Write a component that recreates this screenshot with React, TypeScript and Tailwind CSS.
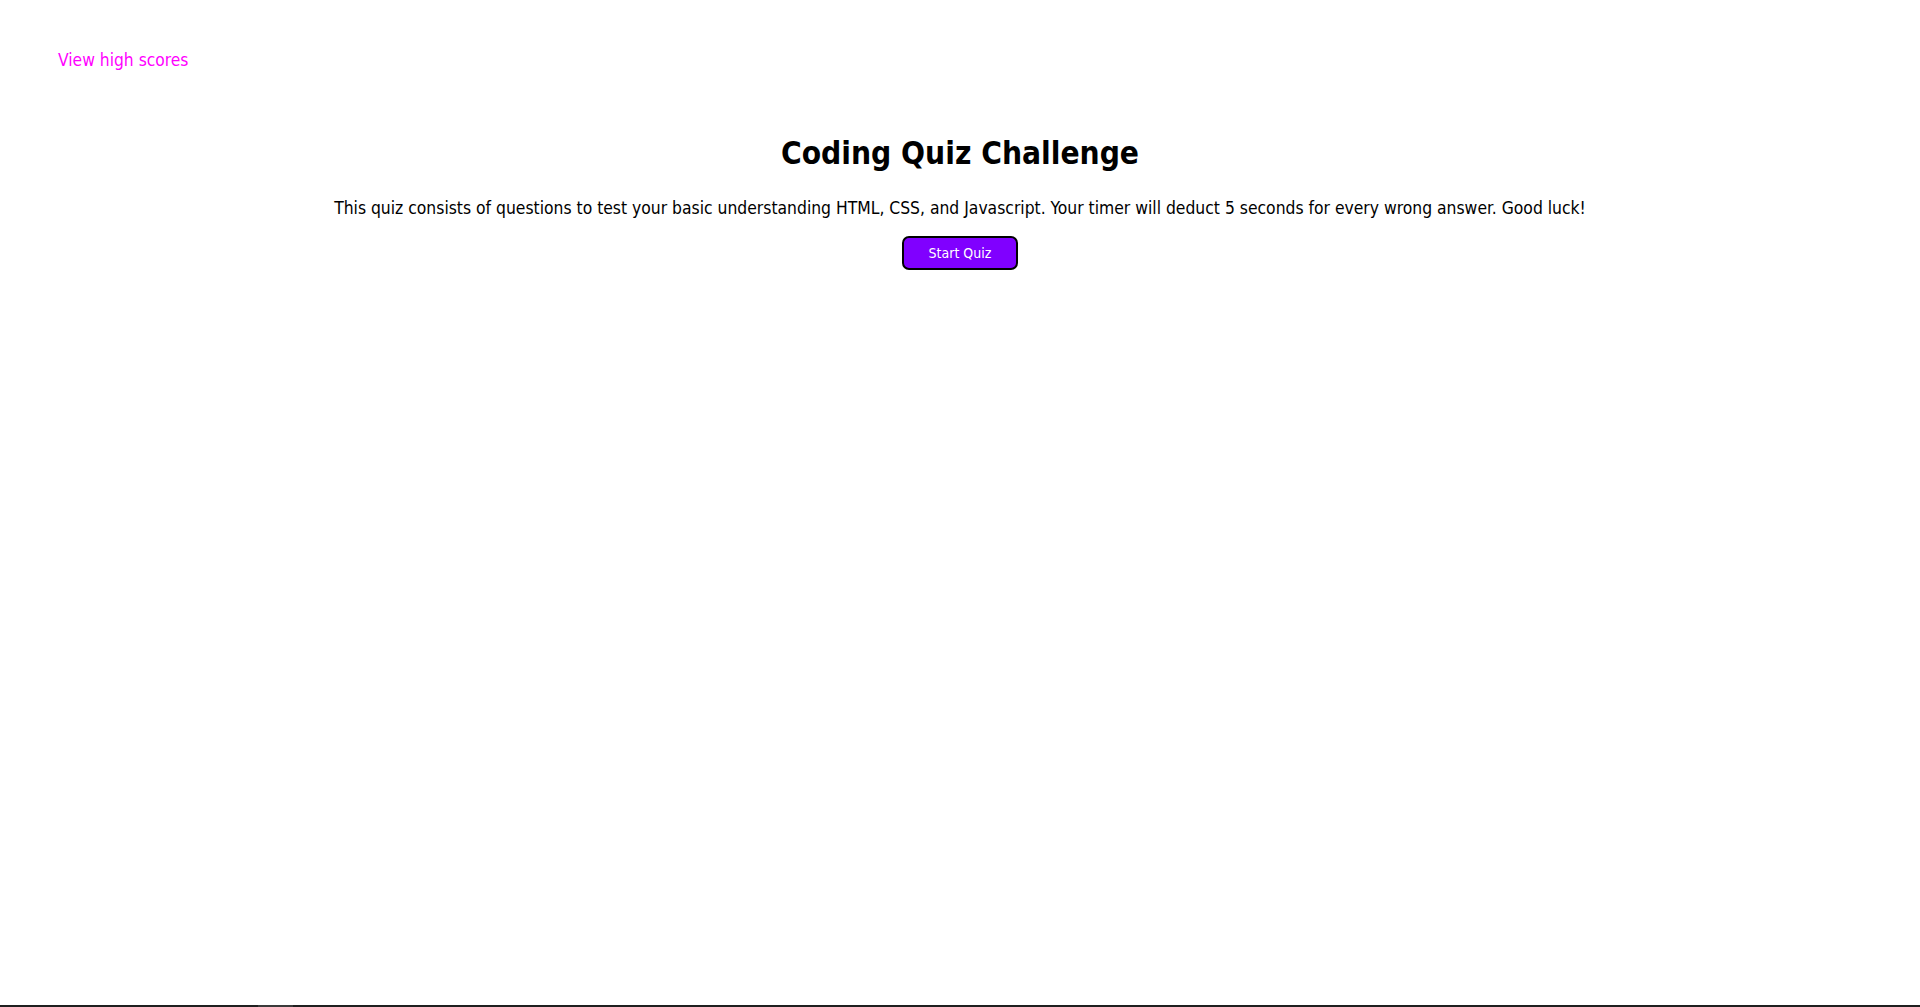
export default function App() {
  return (
    <div className="min-h-screen flex flex-col bg-white text-black font-['DejaVu_Sans_Condensed','DejaVu_Sans',sans-serif]">
      {/* Header */}
      <header className="px-[58px] pt-[49px]">
        <a href="#highscores" className="text-[17.3px] leading-[22px] text-[#ff00ff]">
          View high scores
        </a>
      </header>

      {/* Intro */}
      <main className="flex flex-col items-center text-center pt-[60px]">
        <h1 className="text-[31.4px] leading-[40px] font-bold">Coding Quiz Challenge</h1>
        <p className="mt-[24px] text-[17.35px] leading-[22px]">
          This quiz consists of questions to test your basic understanding HTML, CSS, and Javascript. Your timer will
          deduct 5 seconds for every wrong answer. Good luck!
        </p>
        <button className="mt-[17px] w-[116px] h-[34px] rounded-[7px] border-2 border-black bg-[#8000ff] text-white text-[14px]">
          Start Quiz
        </button>
      </main>

      {/* Bottom strip */}
      <div className="mt-auto h-[2px] flex bg-[#1f1f1f]">
        <div className="ml-[258px] w-[35px] bg-[#3a3a3a]" />
      </div>
    </div>
  );
}
